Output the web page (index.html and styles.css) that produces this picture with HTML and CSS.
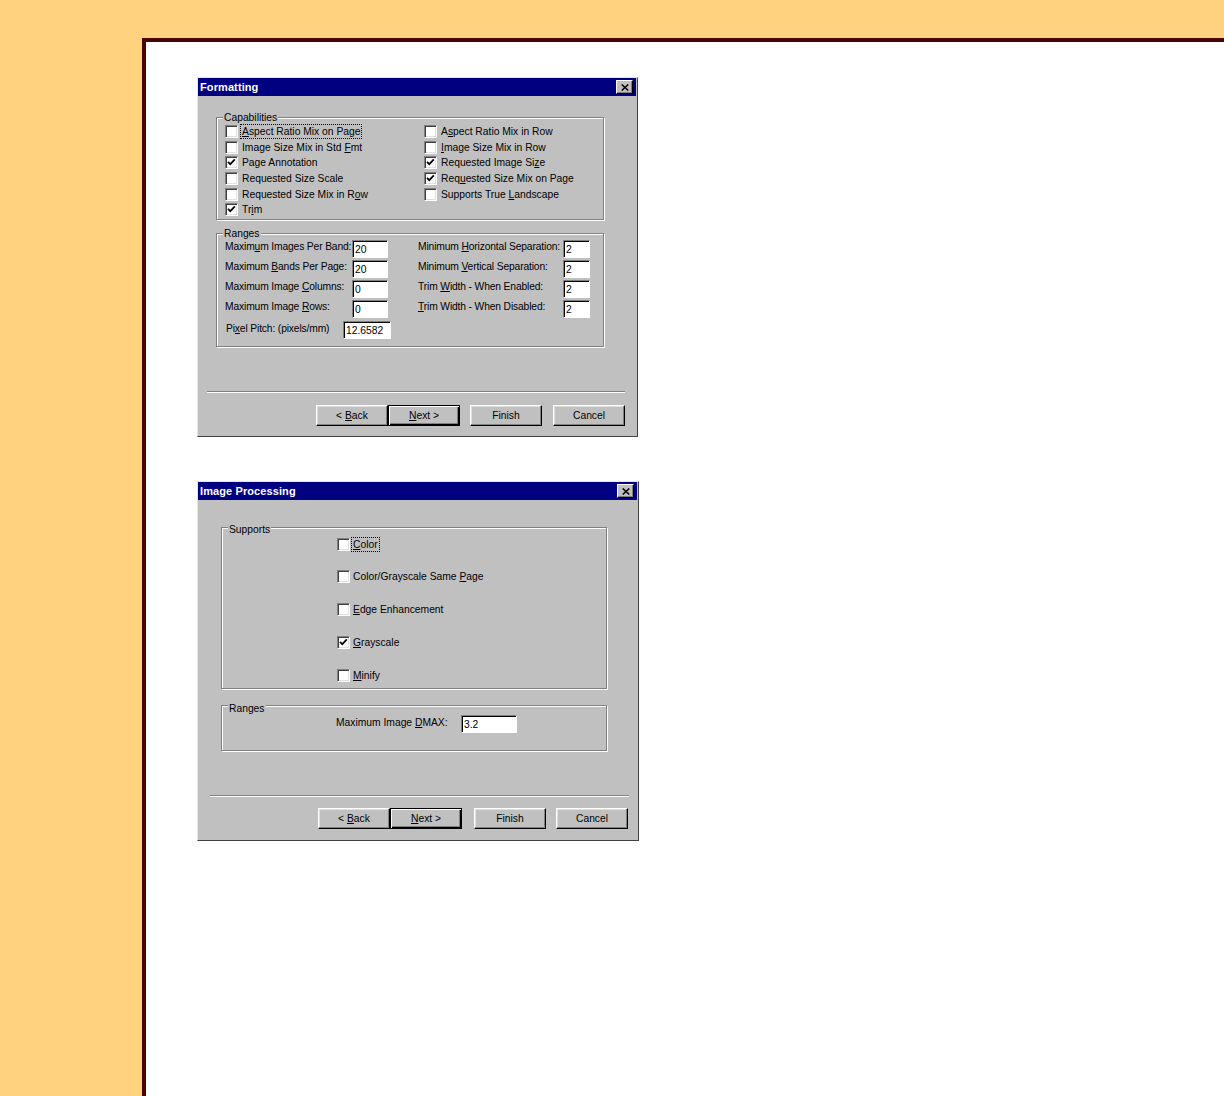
FILE: index.html
```html
<!DOCTYPE html>
<html>
<head>
<meta charset="utf-8">
<title>Formatting / Image Processing</title>
<link rel="stylesheet" href="styles.css">
</head>
<body>
<div class="frame">

  <div class="dialog d1">
    <div class="titlebar">
      <span class="title">Formatting</span>
      <span class="close"><svg width="8" height="7" viewBox="0 0 8 7"><path d="M0.7 0.5 L7.3 6.5 M7.3 0.5 L0.7 6.5" stroke="#000" stroke-width="1.5" fill="none"/></svg></span>
    </div>
    <div class="dlg-body b1">
      <div class="group caps">
        <span class="legend">Capabilities</span>
        <div class="caps-cols">
          <div class="ccol left">
            <div class="chk"><span class="box"></span><span class="lbl focus"><u>A</u>spect Ratio Mix on Page</span></div>
            <div class="chk"><span class="box"></span><span class="lbl">Image Size Mix in Std <u>F</u>mt</span></div>
            <div class="chk"><span class="box"><svg width="11" height="11" viewBox="0 0 11 11"><path d="M2 4.8 L4.3 7.2 L8.8 2.4" stroke="#000" stroke-width="1.7" fill="none"/></svg></span><span class="lbl">Page Annotation</span></div>
            <div class="chk"><span class="box"></span><span class="lbl">Requested Size Scale</span></div>
            <div class="chk"><span class="box"></span><span class="lbl">Requested Size Mix in R<u>o</u>w</span></div>
            <div class="chk"><span class="box"><svg width="11" height="11" viewBox="0 0 11 11"><path d="M2 4.8 L4.3 7.2 L8.8 2.4" stroke="#000" stroke-width="1.7" fill="none"/></svg></span><span class="lbl">Tr<u>i</u>m</span></div>
          </div>
          <div class="ccol right">
            <div class="chk"><span class="box"></span><span class="lbl">A<u>s</u>pect Ratio Mix in Row</span></div>
            <div class="chk"><span class="box"></span><span class="lbl"><u>I</u>mage Size Mix in Row</span></div>
            <div class="chk"><span class="box"><svg width="11" height="11" viewBox="0 0 11 11"><path d="M2 4.8 L4.3 7.2 L8.8 2.4" stroke="#000" stroke-width="1.7" fill="none"/></svg></span><span class="lbl">Requested Image Si<u>z</u>e</span></div>
            <div class="chk"><span class="box"><svg width="11" height="11" viewBox="0 0 11 11"><path d="M2 4.8 L4.3 7.2 L8.8 2.4" stroke="#000" stroke-width="1.7" fill="none"/></svg></span><span class="lbl">Req<u>u</u>ested Size Mix on Page</span></div>
            <div class="chk"><span class="box"></span><span class="lbl">Supports True <u>L</u>andscape</span></div>
          </div>
        </div>
      </div>

      <div class="group ranges">
        <span class="legend">Ranges</span>
        <div class="ranges-cols">
          <div class="rcol rleft">
            <div class="rrow"><span class="rlabel lw1">Maxim<u>u</u>m Images Per Band:</span><span class="field fw1">20</span></div>
            <div class="rrow"><span class="rlabel lw1">Maximum <u>B</u>ands Per Page:</span><span class="field fw1">20</span></div>
            <div class="rrow"><span class="rlabel lw1">Maximum Image <u>C</u>olumns:</span><span class="field fw1">0</span></div>
            <div class="rrow"><span class="rlabel lw1">Maximum Image <u>R</u>ows:</span><span class="field fw1">0</span></div>
            <div class="rrow"><span class="rlabel lw2">Pi<u>x</u>el Pitch: (pixels/mm)</span><span class="field fw2">12.6582</span></div>
          </div>
          <div class="rcol rright">
            <div class="rrow"><span class="rlabel lw3">Minimum <u>H</u>orizontal Separation:</span><span class="field fw3">2</span></div>
            <div class="rrow"><span class="rlabel lw3">Minimum <u>V</u>ertical Separation:</span><span class="field fw3">2</span></div>
            <div class="rrow"><span class="rlabel lw3">Trim <u>W</u>idth - When Enabled:</span><span class="field fw3">2</span></div>
            <div class="rrow"><span class="rlabel lw3"><u>T</u>rim Width - When Disabled:</span><span class="field fw3">2</span></div>
          </div>
        </div>
      </div>
    </div>
    <div class="sep s1"></div>
    <div class="btnrow r1">
      <button class="btn">&lt; <u>B</u>ack</button>
      <button class="btn default"><u>N</u>ext &gt;</button>
      <button class="btn finish">Finish</button>
      <button class="btn cancel">Cancel</button>
    </div>
  </div>

  <div class="dialog d2">
    <div class="titlebar">
      <span class="title">Image Processing</span>
      <span class="close"><svg width="8" height="7" viewBox="0 0 8 7"><path d="M0.7 0.5 L7.3 6.5 M7.3 0.5 L0.7 6.5" stroke="#000" stroke-width="1.5" fill="none"/></svg></span>
    </div>
    <div class="dlg-body b2">
      <div class="group supports">
        <span class="legend">Supports</span>
        <div class="sup-list">
          <div class="chk"><span class="box"></span><span class="lbl focus"><u>C</u>olor</span></div>
          <div class="chk"><span class="box"></span><span class="lbl">Color/Grayscale Same <u>P</u>age</span></div>
          <div class="chk"><span class="box"></span><span class="lbl"><u>E</u>dge Enhancement</span></div>
          <div class="chk"><span class="box"><svg width="11" height="11" viewBox="0 0 11 11"><path d="M2 4.8 L4.3 7.2 L8.8 2.4" stroke="#000" stroke-width="1.7" fill="none"/></svg></span><span class="lbl"><u>G</u>rayscale</span></div>
          <div class="chk"><span class="box"></span><span class="lbl"><u>M</u>inify</span></div>
        </div>
      </div>
      <div class="group ranges2">
        <span class="legend">Ranges</span>
        <div class="dmax-row"><span class="rlabel lw4">Maximum Image <u>D</u>MAX:</span><span class="field fw4">3.2</span></div>
      </div>
    </div>
    <div class="sep s2"></div>
    <div class="btnrow r2">
      <button class="btn">&lt; <u>B</u>ack</button>
      <button class="btn default"><u>N</u>ext &gt;</button>
      <button class="btn finish">Finish</button>
      <button class="btn cancel">Cancel</button>
    </div>
  </div>

</div>
</body>
</html>
```

FILE: styles.css
```css
* { box-sizing: border-box; }

body {
  margin: 0;
  background: #ffd27f;
  font-family: "Liberation Sans", Arial, sans-serif;
}

.frame {
  margin: 38px 0 0 142px;
  height: 1058px;
  border-top: 4px solid #4a0404;
  border-left: 4px solid #4a0404;
  background: #fff;
  padding: 35px 0 0 51px;
}

.dialog {
  height: 360px;
  background: #c0c0c0;
  border: 1px solid;
  border-color: #e6e6e6 #404040 #404040 #e6e6e6;
  display: flex;
  flex-direction: column;
  font-size: 10.3px;
  color: #000;
}
.d1 { width: 441px; }
.d2 { width: 442px; margin-top: 44px; }

.titlebar {
  height: 18px;
  background: #000080;
  color: #fff;
  display: flex;
  align-items: center;
  justify-content: space-between;
  padding: 0 3px 0 2px;
  margin-right: 1px;
}
.title {
  font-weight: bold;
  font-size: 11px;
  letter-spacing: 0.1px;
}
.close {
  width: 17px;
  height: 14px;
  background: #c0c0c0;
  border: 1px solid;
  border-color: #fff #000 #000 #fff;
  box-shadow: inset -1px -1px 0 #808080;
  display: flex;
  align-items: center;
  justify-content: center;
}

.dlg-body { flex: 1; }
.b1 { padding: 21px 0 0 18px; }
.b2 { padding: 27px 0 0 23px; }

/* etched group box */
.group {
  border: 1px solid #808080;
  box-shadow: 1px 1px 0 #fff, inset 1px 1px 0 #fff;
}
.legend {
  display: block;
  width: fit-content;
  height: 12px;
  line-height: 12px;
  margin: -8px 0 0 6px;
  padding: 0 1px;
  background: #c0c0c0;
}

.caps { width: 388px; padding: 2px 0 1px 0; }
.caps-cols { display: flex; padding-left: 8px; }
.ccol.left { width: 199px; }
.ccol { display: flex; flex-direction: column; }

.chk {
  display: flex;
  align-items: center;
  height: 15.6px;
  white-space: nowrap;
}
.box {
  width: 13px;
  height: 13px;
  flex: none;
  background: #fff;
  border: 1px solid;
  border-color: #808080 #fff #fff #808080;
  box-shadow: inset 1px 1px 0 #404040, inset -1px -1px 0 #dfdfdf;
  display: flex;
  align-items: center;
  justify-content: center;
  margin-right: 4px;
}
.lbl {
  line-height: 13px;
  padding: 0 1px 0 0;
}
.lbl.focus {
  outline: 1px dotted #000;
  outline-offset: 0;
  margin-left: -1px;
  padding-left: 1px;
}

.ranges { width: 388px; margin-top: 13px; padding: 2px 0 5px 0; }
.ranges-cols { display: flex; padding-left: 8px; }
.rcol { display: flex; flex-direction: column; }
.rleft { width: 193px; }
.rrow {
  display: flex;
  align-items: flex-start;
  height: 20.3px;
}
.rlabel {
  white-space: nowrap;
  line-height: 13px;
  margin-top: 0;
  letter-spacing: -0.15px;
  flex: none;
}
.lw1 { width: 127px; }
.lw2 { width: 118px; padding-left: 1px; margin-top: 1px; }
.lw3 { width: 145px; }
.lw4 { width: 125px; }

.field {
  height: 18px;
  background: #fff;
  border: 1px solid;
  border-color: #808080 #fff #fff #808080;
  box-shadow: inset 1px 1px 0 #000;
  padding: 2px 0 0 2px;
  line-height: 13px;
  flex: none;
}
.fw1 { width: 36px; }
.fw2 { width: 48px; }
.fw3 { width: 27px; }
.fw4 { width: 56px; }

.supports { width: 386px; padding: 4px 0 5px 0; }
.sup-list {
  display: flex;
  flex-direction: column;
  gap: 16.75px;
  padding-left: 115px;
}
.supports .chk { height: 16px; }
.supports .box { margin-right: 3px; }

.ranges2 { width: 386px; margin-top: 16px; padding: 5px 0 17px 0; }
.dmax-row { display: flex; align-items: flex-start; height: 18px; padding-left: 114px; }
.dmax-row .rlabel { margin-top: 1px; letter-spacing: 0; }

.sep {
  height: 2px;
  border-top: 1px solid #808080;
  border-bottom: 1px solid #fff;
}
.s1 { margin: 0 12px 0 9px; }
.s2 { margin: 0 9px 0 12px; }

.btnrow { display: flex; justify-content: flex-end; }
.r1 { margin: 12px 12px 10px 0; }
.r2 { margin: 11px 10px 11px 0; }

.btn {
  width: 72px;
  height: 21px;
  padding: 0;
  background: #c0c0c0;
  font-family: inherit;
  font-size: 10.3px;
  color: #000;
  border: 1px solid;
  border-color: #fff #000 #000 #fff;
  box-shadow: inset -1px -1px 0 #808080, inset 1px 1px 0 #dfdfdf;
}
.btn.default {
  border: 1px solid #000;
  box-shadow: inset 1px 1px 0 #fff, inset -1px -1px 0 #000, inset -2px -2px 0 #808080;
}
.r1 .finish { margin-left: 10px; }
.r1 .cancel { margin-left: 11px; }
.r2 .finish { margin-left: 12px; }
.r2 .cancel { margin-left: 10px; }
```
